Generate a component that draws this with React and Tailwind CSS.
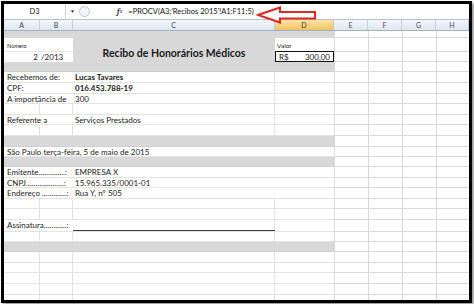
const font = { fontFamily: "Lato, 'Liberation Sans', sans-serif" };

const heads = [
  { l: "A", w: "w-[36px]" },
  { l: "B", w: "w-[33px]" },
  { l: "C", w: "w-[202px]" },
  { l: "D", w: "w-[59px]", on: true },
  { l: "E", w: "w-[34px]" },
  { l: "F", w: "w-[34px]" },
  { l: "G", w: "w-[34px]" },
  { l: "H", w: "w-[33px]" },
];

function GridCells() {
  return (
    <div className="flex h-full shrink-0 border-l border-b border-[#d6d9dd] bg-white">
      <div className="w-[34px] border-r border-[#d6d9dd]" />
      <div className="w-[34px] border-r border-[#d6d9dd]" />
      <div className="w-[34px] border-r border-[#d6d9dd]" />
      <div className="w-[32px]" />
    </div>
  );
}

// one sheet row: A..D content on the left, empty E..H cells on the right
function Row({ h, gray, ab, cd, a, c, bold, under, long }) {
  const line = "border-r border-[#dfe2e6]";
  return (
    <div className={`flex ${h}`}>
      <div
        className={`flex w-[330px] shrink-0 items-center border-b text-[8px] text-[#1a1a1a] ${
          gray ? "border-[#d0d0d0] bg-[#d8d8d8]" : "border-[#e3e3e3] bg-white"
        }`}
      >
        <div className={`h-full w-[36px] shrink-0 whitespace-nowrap pl-[3px] leading-[10px] ${ab ? line : ""}`}>
          {a && <span className="relative top-[0px]">{a}</span>}
          {long && <span>{long}</span>}
        </div>
        <div className={`h-full w-[33px] shrink-0 ${ab ? line : ""}`} />
        <div
          className={`relative h-full w-[202px] shrink-0 pl-[2px] leading-[10px] ${cd ? line : ""} ${
            bold ? "font-bold" : ""
          }`}
        >
          {c}
          {under && <div className="absolute bottom-0 left-0 right-[-1px] h-[1px] bg-[#3a3a3a]" />}
        </div>
        <div className="h-full w-[59px] shrink-0" />
      </div>
      <GridCells />
    </div>
  );
}

function Arrow() {
  return (
    <svg className="absolute left-[252px] top-[2px]" width="62" height="18" viewBox="0 0 62 18">
      <polygon
        points="2,9 24,1.5 24,6 59,6 59,12.5 24,12.5 24,16.5"
        fill="white"
        stroke="#e0261e"
        strokeWidth="2"
        strokeLinejoin="miter"
      />
    </svg>
  );
}

export default function App() {
  const rows = [
    { h: "h-[11px]", a: "Recebemos de:", c: "Lucas Tavares", bold: true, cd: true },
    { h: "h-[11px]", a: "CPF:", c: "016.453.788-19", bold: true, cd: true },
    { h: "h-[10px]", a: "A importância de", c: "300", cd: true },
    { h: "h-[11px]", ab: true, cd: true },
    { h: "h-[10px]", a: "Referente a", c: "Serviços Prestados", cd: true },
    { h: "h-[11px]", ab: true, cd: true },
    { h: "h-[11px]", gray: true },
    { h: "h-[10px]", long: "São Paulo terça-feira, 5 de maio de 2015" },
    { h: "h-[10px]", gray: true },
    { h: "h-[11px]", a: "Emitente..............:", c: "EMPRESA X" },
    { h: "h-[10px]", a: "CNPJ....................:", c: "15.965.335/0001-01" },
    { h: "h-[11px]", a: "Endereço .............:", c: "Rua Y, nº 505" },
    { h: "h-[10px]", ab: true, cd: true },
    { h: "h-[11px]", ab: true, cd: true },
    { h: "h-[12px]", a: "Assinatura............:", under: true, cd: true },
    { h: "h-[10px]", ab: true, cd: true },
    { h: "h-[10px]", gray: true },
    { h: "h-[11px]", ab: true, cd: true },
    { h: "h-[10px]", ab: true, cd: true },
    { h: "h-[11px]", ab: true, cd: true },
    { h: "h-[11px]", ab: true, cd: true },
    { h: "h-[11px]", ab: true, cd: true },
  ];

  return (
    <div className="h-[304px] w-[474px] bg-white pl-[1px] pt-[1px]" style={font}>
      <div className="h-[302px] w-[471px] overflow-hidden border-[3px] border-black bg-white shadow-[2px_2px_3px_rgba(0,0,0,0.45)]">
        {/* formula bar */}
        <div className="relative flex h-[16px] items-center border-b border-[#b7c2cf] bg-white text-[7.5px] text-[#111]">
          <div className="flex h-full w-[62px] items-center justify-center border-r border-[#cdd3da]">D3</div>
          <span className="ml-[4px] text-[5px] text-[#333]">▼</span>
          <div className="ml-[4px] h-[11px] w-[11px] rounded-full border border-[#b9c7d8] bg-[#f2f5f9]" />
          <span className="ml-[27px] font-serif text-[8px] font-bold italic text-[#333]">f</span>
          <span className="font-serif text-[6px] italic text-[#333]">x</span>
          <span className="ml-[6px]">=PROCV(A3;'Recibos 2015'!A1:F11;5)</span>
          <Arrow />
        </div>

        {/* column headers */}
        <div className="flex h-[11px] border-b border-[#9fb4cb]">
          {heads.map((c) => (
            <div
              key={c.l}
              className={`${c.w} flex shrink-0 items-center justify-center border-r border-[#c3cdd9] text-[7px] ${
                c.on
                  ? "bg-gradient-to-b from-[#fbe3a6] to-[#f1c35d] text-[#333]"
                  : "bg-gradient-to-b from-[#f4f7fb] to-[#dfe6ef] text-[#3b4a5c]"
              }`}
            >
              {c.l}
            </div>
          ))}
        </div>

        {/* receipt header block */}
        <div className="flex h-[41px]">
          <div className="flex w-[330px] shrink-0 border-b border-[#d0d0d0] bg-[#d8d8d8] pt-[7px] text-[#1a1a1a]">
            <div className="flex h-[24px] w-[69px] shrink-0 flex-col bg-white">
              <div className="h-[14px] border-b border-[#e3e3e3] pl-[3px] pt-[5px] text-[5.5px] leading-[6px]">Número</div>
              <div className="flex h-[10px] items-center text-[8px]">
                <span className="w-[36px] pr-[2px] text-right">2</span>
                <span className="pl-[1px]">/2013</span>
              </div>
            </div>
            <div className="flex w-[202px] shrink-0 items-center justify-center pb-[2px] text-[10.5px] font-bold">
              Recibo de Honorários Médicos
            </div>
            <div className="flex h-[24px] w-[59px] shrink-0 flex-col bg-white">
              <div className="h-[13px] pl-[2px] pt-[4px] text-[6.5px] leading-[7px]">Valor</div>
              <div className="flex h-[11px] items-center justify-between border border-[#111] px-[3px] text-[8px]">
                <span>R$</span>
                <span>300,00</span>
              </div>
            </div>
          </div>
          <div className="flex flex-col">
            <div className="h-[7px]"><GridCells /></div>
            <div className="h-[14px]"><GridCells /></div>
            <div className="h-[10px]"><GridCells /></div>
            <div className="h-[10px]"><GridCells /></div>
          </div>
        </div>

        {rows.map((r, i) => (
          <Row key={i} {...r} />
        ))}
      </div>
    </div>
  );
}
